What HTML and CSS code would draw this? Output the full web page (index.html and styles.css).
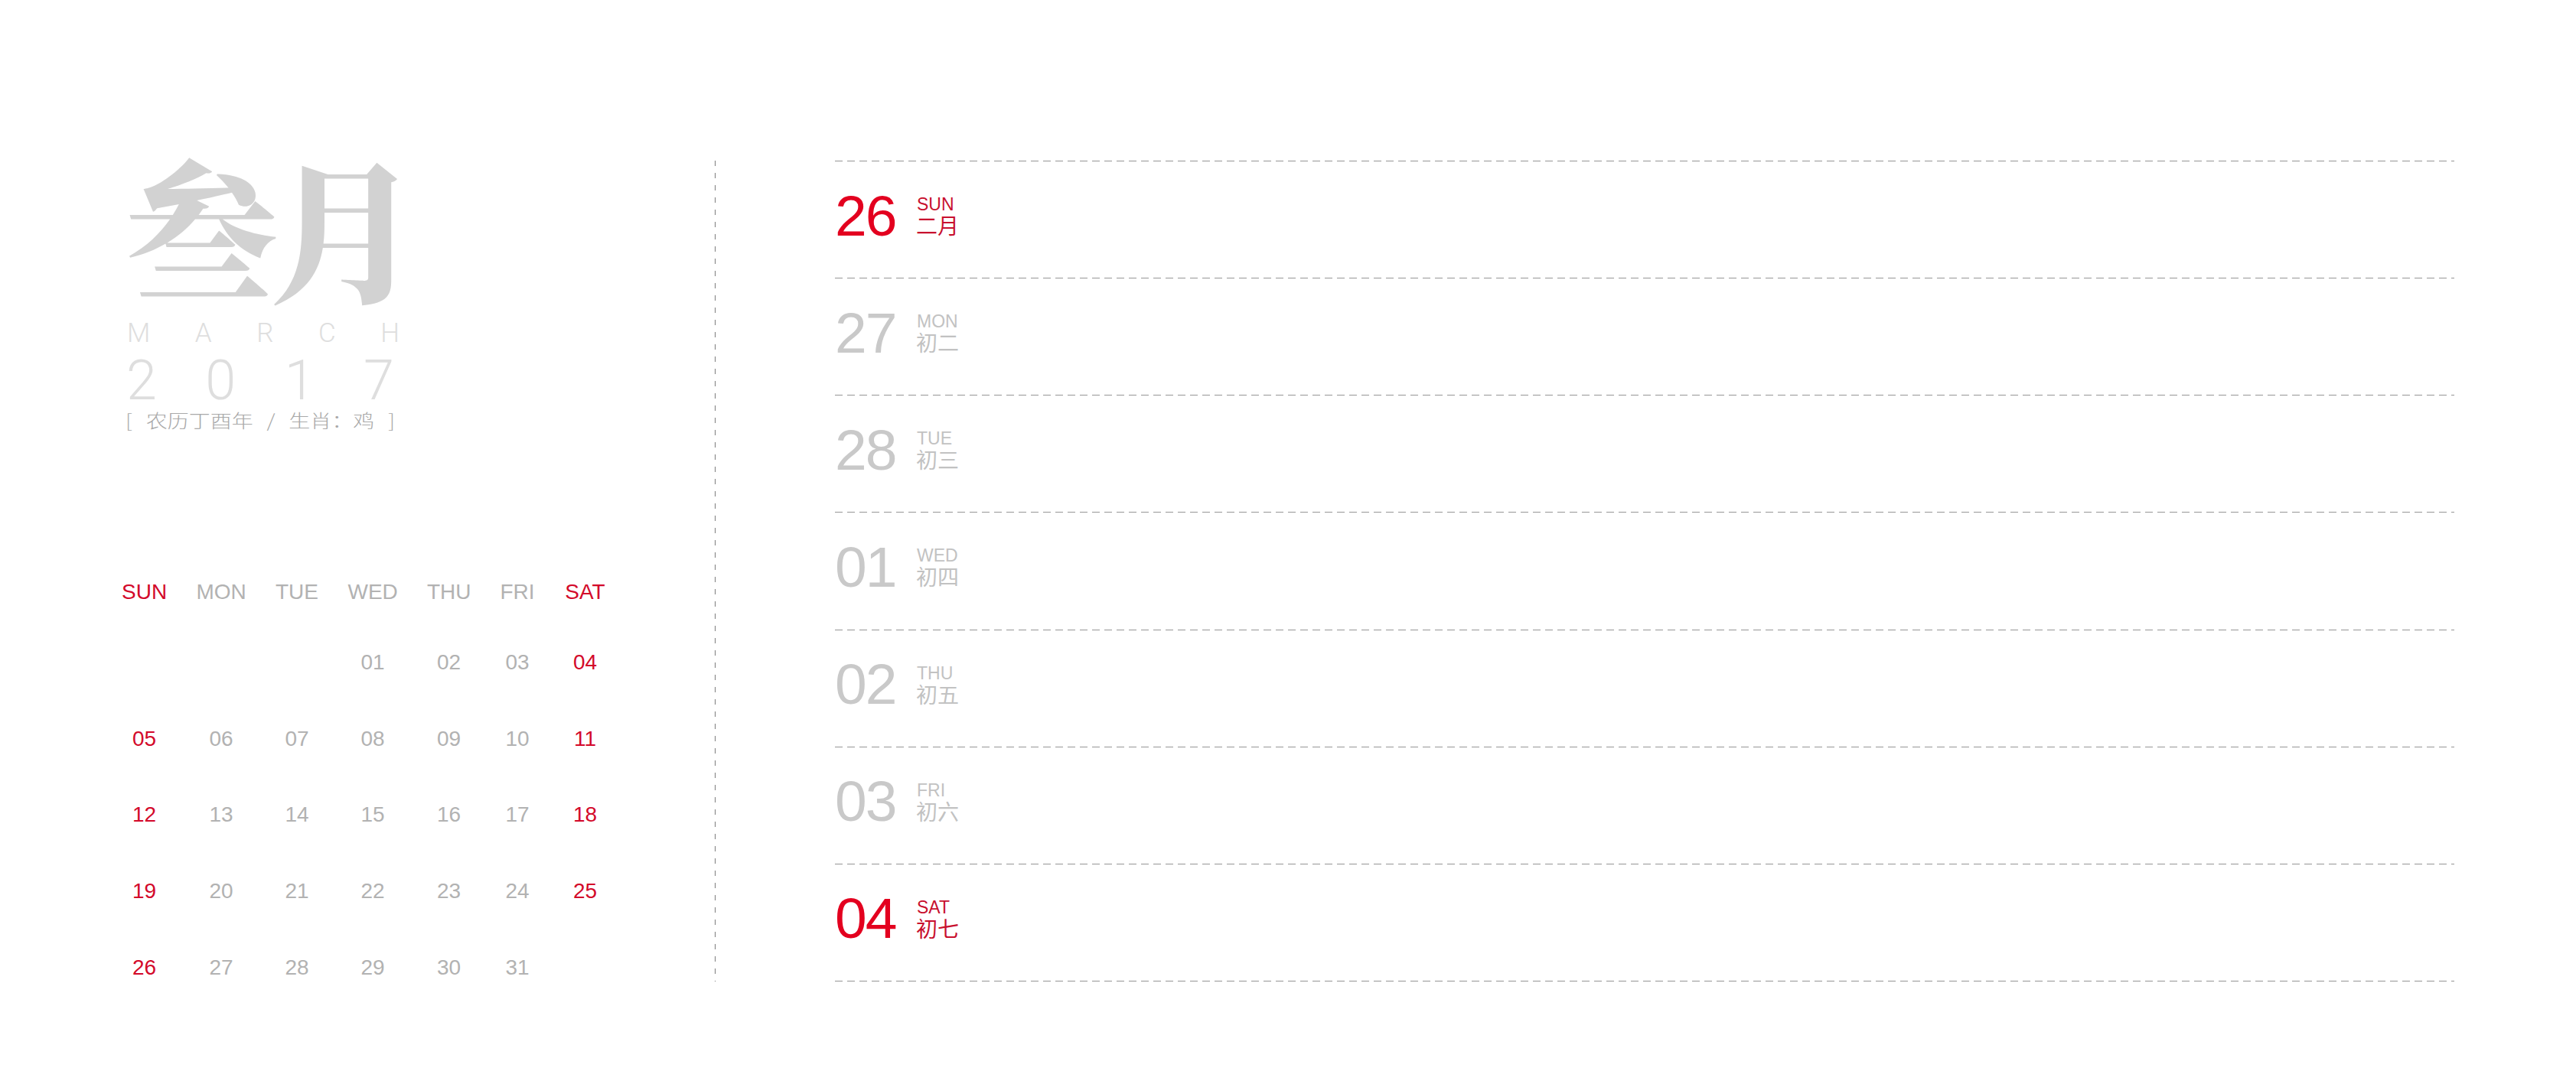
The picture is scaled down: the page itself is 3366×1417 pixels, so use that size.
FILE: index.html
```html
<!DOCTYPE html>
<html lang="zh">
<head>
<meta charset="utf-8">
<title>March 2017</title>
<link rel="stylesheet" href="styles.css">
</head>
<body>
<div class="page">
  <section class="left">
    <div class="title">叁月</div>
    <div class="month"><span>M</span><span>A</span><span>R</span><span>C</span><span>H</span></div>
    <div class="year"><span>2</span><span>0</span><span>1</span><span>7</span></div>
    <div class="lunar"><span>[</span><span>农历丁酉年</span><span>/</span><span>生肖：鸡</span><span>]</span></div>

    <div class="cal head">
      <div class="c red">SUN</div>
      <div class="c">MON</div>
      <div class="c">TUE</div>
      <div class="c">WED</div>
      <div class="c">THU</div>
      <div class="c">FRI</div>
      <div class="c red">SAT</div>
    </div>
    <div class="cal dates">
      <div class="c"></div><div class="c"></div><div class="c"></div>
      <div class="c">01</div><div class="c">02</div><div class="c">03</div><div class="c red">04</div>
      <div class="c red">05</div><div class="c">06</div><div class="c">07</div><div class="c">08</div><div class="c">09</div><div class="c">10</div><div class="c red">11</div>
      <div class="c red">12</div><div class="c">13</div><div class="c">14</div><div class="c">15</div><div class="c">16</div><div class="c">17</div><div class="c red">18</div>
      <div class="c red">19</div><div class="c">20</div><div class="c">21</div><div class="c">22</div><div class="c">23</div><div class="c">24</div><div class="c red">25</div>
      <div class="c red">26</div><div class="c">27</div><div class="c">28</div><div class="c">29</div><div class="c">30</div><div class="c">31</div><div class="c"></div>
    </div>
  </section>

  <div class="divider"></div>

  <section class="right">
    <div class="row hot"><div class="num">26</div><div class="meta"><div class="dow">SUN</div><div class="lun">二月</div></div></div>
    <div class="row"><div class="num">27</div><div class="meta"><div class="dow">MON</div><div class="lun">初二</div></div></div>
    <div class="row"><div class="num">28</div><div class="meta"><div class="dow">TUE</div><div class="lun">初三</div></div></div>
    <div class="row"><div class="num">01</div><div class="meta"><div class="dow">WED</div><div class="lun">初四</div></div></div>
    <div class="row"><div class="num">02</div><div class="meta"><div class="dow">THU</div><div class="lun">初五</div></div></div>
    <div class="row"><div class="num">03</div><div class="meta"><div class="dow">FRI</div><div class="lun">初六</div></div></div>
    <div class="row hot"><div class="num">04</div><div class="meta"><div class="dow">SAT</div><div class="lun">初七</div></div></div>
  </section>
</div>
</body>
</html>
```

FILE: styles.css
```css
html, body {
  margin: 0;
  padding: 0;
  background: #ffffff;
}

body {
  width: 3366px;
  height: 1417px;
  overflow: hidden;
  font-family: "Liberation Sans", Arial, "Noto Sans CJK SC", sans-serif;
}

.page {
  display: flex;
  align-items: flex-start;
  padding-top: 210px;
}

/* ---------- left panel ---------- */
.left {
  width: 934px;
  box-sizing: border-box;
  padding-left: 159px;
  display: flex;
  flex-direction: column;
}

.title {
  margin-left: 5px;
  margin-top: -22px;
  height: 216px;
  font-family: "Noto Serif CJK SC", "Noto Sans CJK SC", serif;
  font-weight: 900;
  font-size: 200px;
  line-height: 212px;
  letter-spacing: -14px;
  color: #d2d2d2;
  white-space: nowrap;
}

.month {
  margin-left: 7px;
  margin-top: 17px;
  width: 356px;
  height: 30px;
  display: flex;
  justify-content: space-between;
  font-family: Roboto, "Liberation Sans", sans-serif;
  font-weight: 300;
  font-size: 35px;
  line-height: 30px;
  color: #dedede;
}

.year {
  margin-left: 6px;
  margin-top: 19px;
  width: 350px;
  height: 56px;
  display: flex;
  justify-content: space-between;
  font-family: Roboto, "Liberation Sans", sans-serif;
  font-weight: 300;
  font-size: 72px;
  line-height: 56px;
  color: #dedede;
}

.lunar {
  margin-left: 5px;
  margin-top: 8px;
  width: 352px;
  height: 30px;
  display: flex;
  justify-content: space-between;
  align-items: center;
  font-family: "Noto Sans CJK SC", sans-serif;
  font-weight: 300;
  font-size: 28px;
  line-height: 30px;
  color: #a9a9a9;
  white-space: nowrap;
}

.lunar span {
  display: inline-block;
  transform: scaleY(0.84);
  transform-origin: center;
}

.cal {
  display: grid;
  grid-template-columns: 59px 65px 56px 65px 57px 45px 55px;
  column-gap: 38.5px;
  color: #b2b2b2;
  font-family: "Liberation Sans", Arial, sans-serif;
  font-size: 28px;
}

.cal .c {
  text-align: center;
  white-space: nowrap;
}

.cal .red {
  color: #d3092a;
}

.head {
  margin-top: 190px;
  line-height: 40px;
  height: 40px;
}

.dates {
  margin-top: 52px;
  grid-auto-rows: 40px;
  row-gap: 59.7px;
  line-height: 40px;
}

/* ---------- divider ---------- */
.divider {
  width: 2px;
  height: 1073px;
  background-image: linear-gradient(to bottom, #7c7c7c 0 7px, transparent 7px 16px);
  background-size: 1px 16px;
  background-repeat: repeat-y;
  background-position: 0 0;
}

/* ---------- right panel ---------- */
.right {
  margin-left: 155px;
  width: 2116px;
  display: flex;
  flex-direction: column;
  background-image: linear-gradient(to right, #959595 0 10px, transparent 10px 16px);
  background-size: 16px 1px;
  background-repeat: repeat-x;
  background-position: left bottom;
  padding-bottom: 1px;
}

.row {
  height: 153.15px;
  box-sizing: border-box;
  padding-bottom: 9px;
  display: flex;
  align-items: center;
  background-image: linear-gradient(to right, #959595 0 10px, transparent 10px 16px);
  background-size: 16px 1px;
  background-repeat: repeat-x;
  background-position: left top;
  color: #c9c9c9;
}

.num {
  width: 107px;
  font-family: "Liberation Sans", Arial, sans-serif;
  font-size: 75px;
  line-height: 75px;
  letter-spacing: -2px;
}

.meta {
  display: flex;
  flex-direction: column;
  color: #c2c2c2;
}

.dow {
  font-family: "Liberation Sans", Arial, sans-serif;
  font-size: 23px;
  line-height: 24px;
}

.lun {
  font-family: "Noto Sans CJK SC", sans-serif;
  font-size: 28px;
  line-height: 30px;
  margin-left: -1px;
}

.hot .num {
  color: #e3001f;
}

.hot .meta {
  color: #c8102e;
}
```
